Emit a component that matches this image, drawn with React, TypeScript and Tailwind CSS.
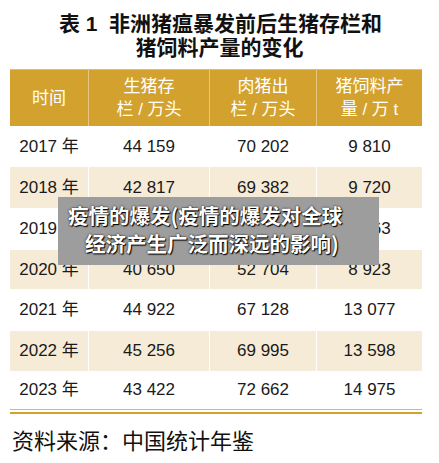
import React from "react";

const rows = [
  ["2017 年", "44 159", "70 202", "9 810", "h-[41px]"],
  ["2018 年", "42 817", "69 382", "9 720", "h-[41px]"],
  ["2019 年", "", "", "8 463", "h-[42px]"],
  ["2020 年", "40 650", "52 704", "8 923", "h-[39px]"],
  ["2021 年", "44 922", "67 128", "13 077", "h-[42px]"],
  ["2022 年", "45 256", "69 995", "13 598", "h-[40px]"],
  ["2023 年", "43 422", "72 662", "14 975", "h-[38px]"],
];

const widths = ["w-[78px]", "w-[121px]", "w-[107px]", "w-[106px]"];

export default function App() {
  return (
    <div
      className="relative w-[439px] h-[463px] bg-white overflow-hidden"
      style={{ fontFamily: '"Liberation Sans", "Noto Sans CJK SC", sans-serif' }}
    >
      <div className="pt-[12px] h-[69px] text-center text-[21px] leading-[24px] font-bold text-[#111]">
        <div className="pl-[2px]">表 1&nbsp;&nbsp;非洲猪瘟暴发前后生猪存栏和</div>
        <div>猪饲料产量的变化</div>
      </div>
      <div className="ml-[10px] w-[412px]">
        <div className="flex h-[57px] bg-[#d3a22e] text-white text-[17px] leading-[23px] border-t border-[#e2bd6c]">
          <div className={`${widths[0]} flex items-center justify-center`}>时间</div>
          <div className={`${widths[1]} flex flex-col items-center justify-center border-l border-[#e6c682]`}>
            <div>生猪存</div>
            <div>栏 / 万头</div>
          </div>
          <div className={`${widths[2]} flex flex-col items-center justify-center border-l border-[#e6c682]`}>
            <div>肉猪出</div>
            <div>栏 / 万头</div>
          </div>
          <div className={`${widths[3]} flex flex-col items-center justify-center border-l border-[#e6c682]`}>
            <div>猪饲料产</div>
            <div>量 / 万 t</div>
          </div>
        </div>
        {rows.map((r, i) => {
          const beige = i % 2 === 1;
          return (
            <div
              key={i}
              className={`flex ${r[4]} text-[17px] text-[#1a1a1a] ${beige ? "bg-[#f6ebd7]" : "bg-white"}`}
            >
              {[0, 1, 2, 3].map((c) => (
                <div
                  key={c}
                  className={`${widths[c]} flex items-center justify-center ${c > 0 ? (beige ? "border-l border-white" : "border-l border-transparent") : ""}`}
                >
                  {r[c]}
                </div>
              ))}
            </div>
          );
        })}
        <div className="h-[1px] bg-[#dcb865]" />
        <div className="h-[2px] bg-white" />
        <div className="h-[2px] bg-[#d4a22b]" />
      </div>
      <div
        className="pl-[12px] pt-[13px] text-[22px] leading-[24px] text-[#111]"
        style={{ fontFamily: '"Noto Sans CJK SC", sans-serif' }}
      >
        资料来源：中国统计年鉴
      </div>
      <div className="absolute left-[58px] top-[197px] w-[321px] h-[68px] bg-[#9d9d9d] text-white font-bold text-[20.5px] leading-[28px] pt-[4px] [text-shadow:0_0_2px_#000,1px_1px_1px_#000]"
        style={{ fontFamily: '"Noto Sans CJK SC", sans-serif' }}
      >
        <div className="pl-[10px] whitespace-nowrap">疫情的爆发(疫情的爆发对全球</div>
        <div className="pl-[27px] whitespace-nowrap">经济产生广泛而深远的影响)</div>
      </div>
    </div>
  );
}
